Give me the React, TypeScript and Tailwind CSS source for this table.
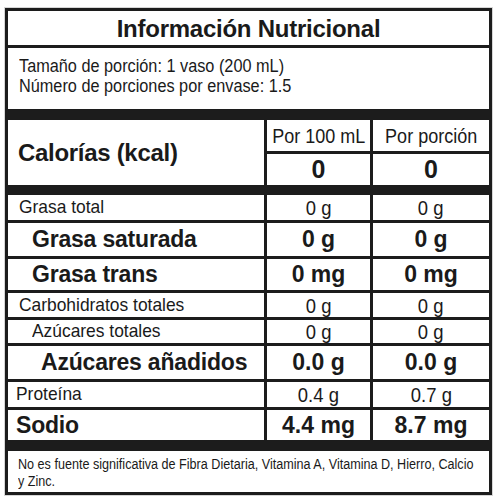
import React from "react";

const font = {
  fontFamily: '"Liberation Sans", Arial, sans-serif',
};

type Row = {
  label: string;
  a: string;
  b: string;
  h: string;
  pad: string;
  big?: boolean;
};

const rows: Row[] = [
  { label: "Grasa total", a: "0 g", b: "0 g", h: "h-[25px]", pad: "pl-[11px]" },
  { label: "Grasa saturada", a: "0 g", b: "0 g", h: "h-[33px]", pad: "pl-[24px]", big: true },
  { label: "Grasa trans", a: "0 mg", b: "0 mg", h: "h-[31px]", pad: "pl-[24px]", big: true },
  { label: "Carbohidratos totales", a: "0 g", b: "0 g", h: "h-[24px]", pad: "pl-[11px]" },
  { label: "Azúcares totales", a: "0 g", b: "0 g", h: "h-[23px]", pad: "pl-[24px]" },
  { label: "Azúcares añadidos", a: "0.0 g", b: "0.0 g", h: "h-[33px]", pad: "pl-[33px]", big: true },
  { label: "Proteína", a: "0.4 g", b: "0.7 g", h: "h-[25px]", pad: "pl-[8px]" },
  { label: "Sodio", a: "4.4 mg", b: "8.7 mg", h: "h-[30px]", pad: "pl-[8px]", big: true },
];

// condensed text pieces keep their glyph height, only squeezed sideways
const Label = ({ row }: { row: Row }) =>
  row.big ? (
    <span className="text-[23px] leading-none font-bold tracking-[-0.2px]">{row.label}</span>
  ) : (
    <span className="inline-block whitespace-nowrap text-[18.5px] leading-none scale-x-[0.94] origin-left">
      {row.label}
    </span>
  );

const Value = ({ big, children }: { big?: boolean; children: string }) =>
  big ? (
    <span className="text-[23px] leading-none font-bold">{children}</span>
  ) : (
    <span className="inline-block whitespace-nowrap text-[21px] leading-none scale-x-[0.88]">{children}</span>
  );

const NutriRow = ({ row }: { row: Row }) => (
  <div className={`grid grid-cols-[256px_103px_116px] gap-x-[3px] ${row.h}`}>
    <div className={`bg-white flex items-center ${row.pad}`}>
      <Label row={row} />
    </div>
    <div className="bg-white flex items-center justify-center">
      <Value big={row.big}>{row.a}</Value>
    </div>
    <div className="bg-white flex items-center justify-center">
      <Value big={row.big}>{row.b}</Value>
    </div>
  </div>
);

export default function App() {
  return (
    <div className="w-[500px] h-[502px] bg-white pt-[7px] pl-[4px]" style={font}>
      <div className="w-[489px] border border-[#d6d6d6]">
        <div className="border-[3px] border-[#1c1c1c] bg-[#1c1c1c] text-[#1a1a1a] flex flex-col">
          <div className="h-[34px] bg-white flex items-center justify-center text-[24px] leading-none font-bold tracking-[-0.25px] pt-[1px]">
            Información Nutricional
          </div>
          <div className="h-[61px] mt-[3px] bg-white flex flex-col pl-[11px] pt-[9px] gap-[1px]">
            <span className="inline-block whitespace-nowrap text-[17.5px] leading-[19px] scale-x-[0.93] origin-left">
              Tamaño de porción: 1 vaso (200 mL)
            </span>
            <span className="inline-block whitespace-nowrap text-[17.5px] leading-[19px] scale-x-[0.93] origin-left">
              Número de porciones por envase: 1.5
            </span>
          </div>
          <div className="mt-[11px] grid grid-cols-[256px_103px_116px] grid-rows-[31px_31px] gap-[3px]">
            <div className="row-span-2 bg-white flex items-center pl-[10px]">
              <span className="text-[24px] leading-none font-bold tracking-[-0.3px]">Calorías (kcal)</span>
            </div>
            <div className="bg-white flex items-center justify-center">
              <span className="inline-block whitespace-nowrap text-[20px] leading-none scale-x-[0.9]">Por 100 mL</span>
            </div>
            <div className="bg-white flex items-center justify-center">
              <span className="inline-block whitespace-nowrap text-[20px] leading-none scale-x-[0.9]">Por porción</span>
            </div>
            <div className="bg-white flex items-center justify-center">
              <span className="text-[25px] leading-none font-bold">0</span>
            </div>
            <div className="bg-white flex items-center justify-center">
              <span className="text-[25px] leading-none font-bold">0</span>
            </div>
          </div>
          <div className="mt-[10px] flex flex-col gap-[3px]">
            {rows.map((r) => (
              <NutriRow key={r.label} row={r} />
            ))}
          </div>
          <div className="mt-[11px] h-[41px] bg-white pl-[10px] pt-[5px] overflow-hidden flex flex-col">
            <span className="inline-block whitespace-nowrap text-[14px] leading-[17px] scale-x-[0.9] origin-left">
              No es fuente significativa de Fibra Dietaria, Vitamina A, Vitamina D, Hierro, Calcio
            </span>
            <span className="inline-block whitespace-nowrap text-[14px] leading-[17px] scale-x-[0.9] origin-left">
              y Zinc.
            </span>
          </div>
        </div>
      </div>
    </div>
  );
}
